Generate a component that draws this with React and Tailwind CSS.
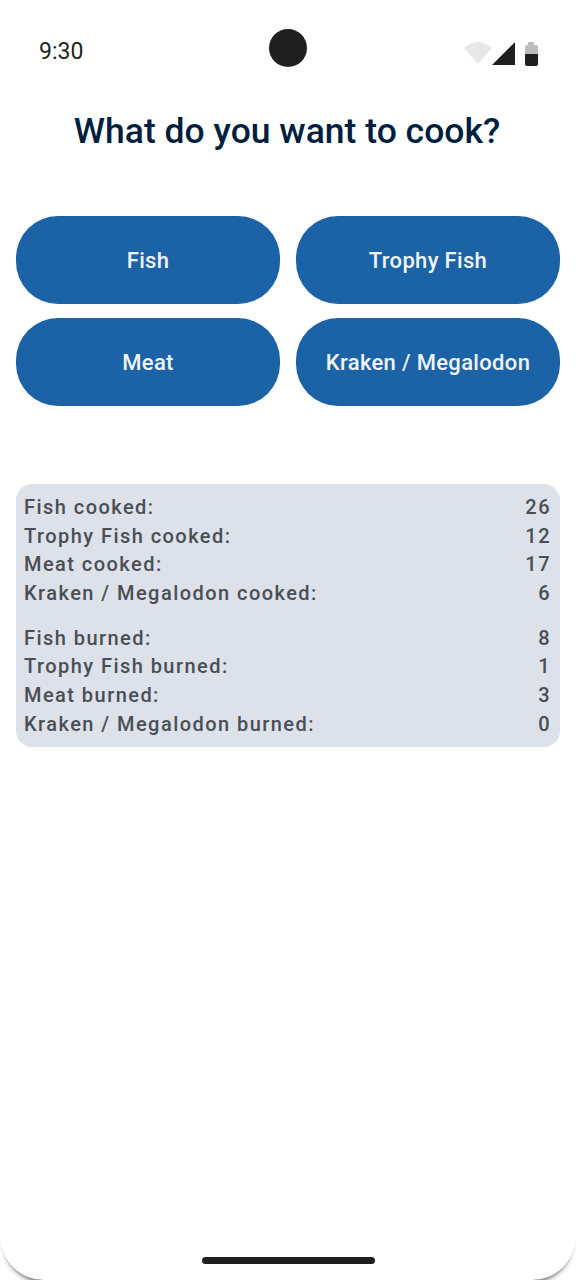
const rowsCooked = [
  ["Fish cooked:", "26"],
  ["Trophy Fish cooked:", "12"],
  ["Meat cooked:", "17"],
  ["Kraken / Megalodon cooked:", "6"],
];
const rowsBurned = [
  ["Fish burned:", "8"],
  ["Trophy Fish burned:", "1"],
  ["Meat burned:", "3"],
  ["Kraken / Megalodon burned:", "0"],
];

function Rows({ rows }) {
  return (
    <div className="flex flex-col">
      {rows.map(([label, value]) => (
        <div key={label} className="flex h-[28.7px] items-center justify-between">
          <span>{label}</span>
          <span>{value}</span>
        </div>
      ))}
    </div>
  );
}

function CookButton({ children }) {
  return (
    <button className="flex h-[88px] w-[264px] items-center justify-center rounded-[42px] bg-[#1b62a7] text-[22px] font-medium tracking-[0.33px] text-[#f0f3f8]">
      {children}
    </button>
  );
}

export default function App() {
  return (
    <div className="h-[1280px] w-[576px] overflow-hidden bg-white font-['Roboto',sans-serif]">
      <div className="flex h-[1280px] flex-col rounded-[44px] bg-white shadow-[0_6px_5px_-4px_rgba(0,0,0,0.65)]">
        <div className="relative flex h-[102px] items-center justify-between pl-[39px] pr-[36px]">
          <span className="mt-[2px] text-[23px] text-[#1f1f1f]">9:30</span>
          <div className="absolute left-[269px] top-[29px] h-[38px] w-[38px] rounded-full bg-[#1f1f1f]" />
          <svg width="76" height="30" viewBox="0 0 76 30">
            <path d="M0 12 Q14 0 28 12 L14 28 Z" fill="#e8e8e8" />
            <path d="M28 29 L51 6 V29 Z" fill="#1f1f1f" />
            <path d="M64 6 H70 V9 H72 Q74 9 74 11 V18 H61 V11 Q61 9 63 9 H64 Z" fill="#bdbdbd" />
            <path d="M61 18 H74 V28 Q74 30 72 30 H63 Q61 30 61 28 Z" fill="#1f1f1f" />
          </svg>
        </div>
        <h1 className="mt-[7px] pr-[2px] text-center text-[35.5px] leading-[44px] font-medium text-[#001f3f]">What do you want to cook?</h1>
        <div className="mt-[63px] grid grid-cols-[264px_264px] gap-x-[16px] gap-y-[14px] px-[16px]">
          <CookButton>Fish</CookButton>
          <CookButton>Trophy Fish</CookButton>
          <CookButton>Meat</CookButton>
          <CookButton>Kraken / Megalodon</CookButton>
        </div>
        <div className="mx-[16px] mt-[78px] flex h-[263px] flex-col gap-[16px] rounded-[16px] bg-[#dce1ea] pl-[8px] pr-[9px] pt-[8.7px] text-[20px] font-medium tracking-[1.45px] text-[#4a4e55]">
          <Rows rows={rowsCooked} />
          <Rows rows={rowsBurned} />
        </div>
        <div className="mt-auto mb-[16px] h-[7px] w-[173px] self-center rounded-full bg-[#1f1f1f]" />
      </div>
    </div>
  );
}
